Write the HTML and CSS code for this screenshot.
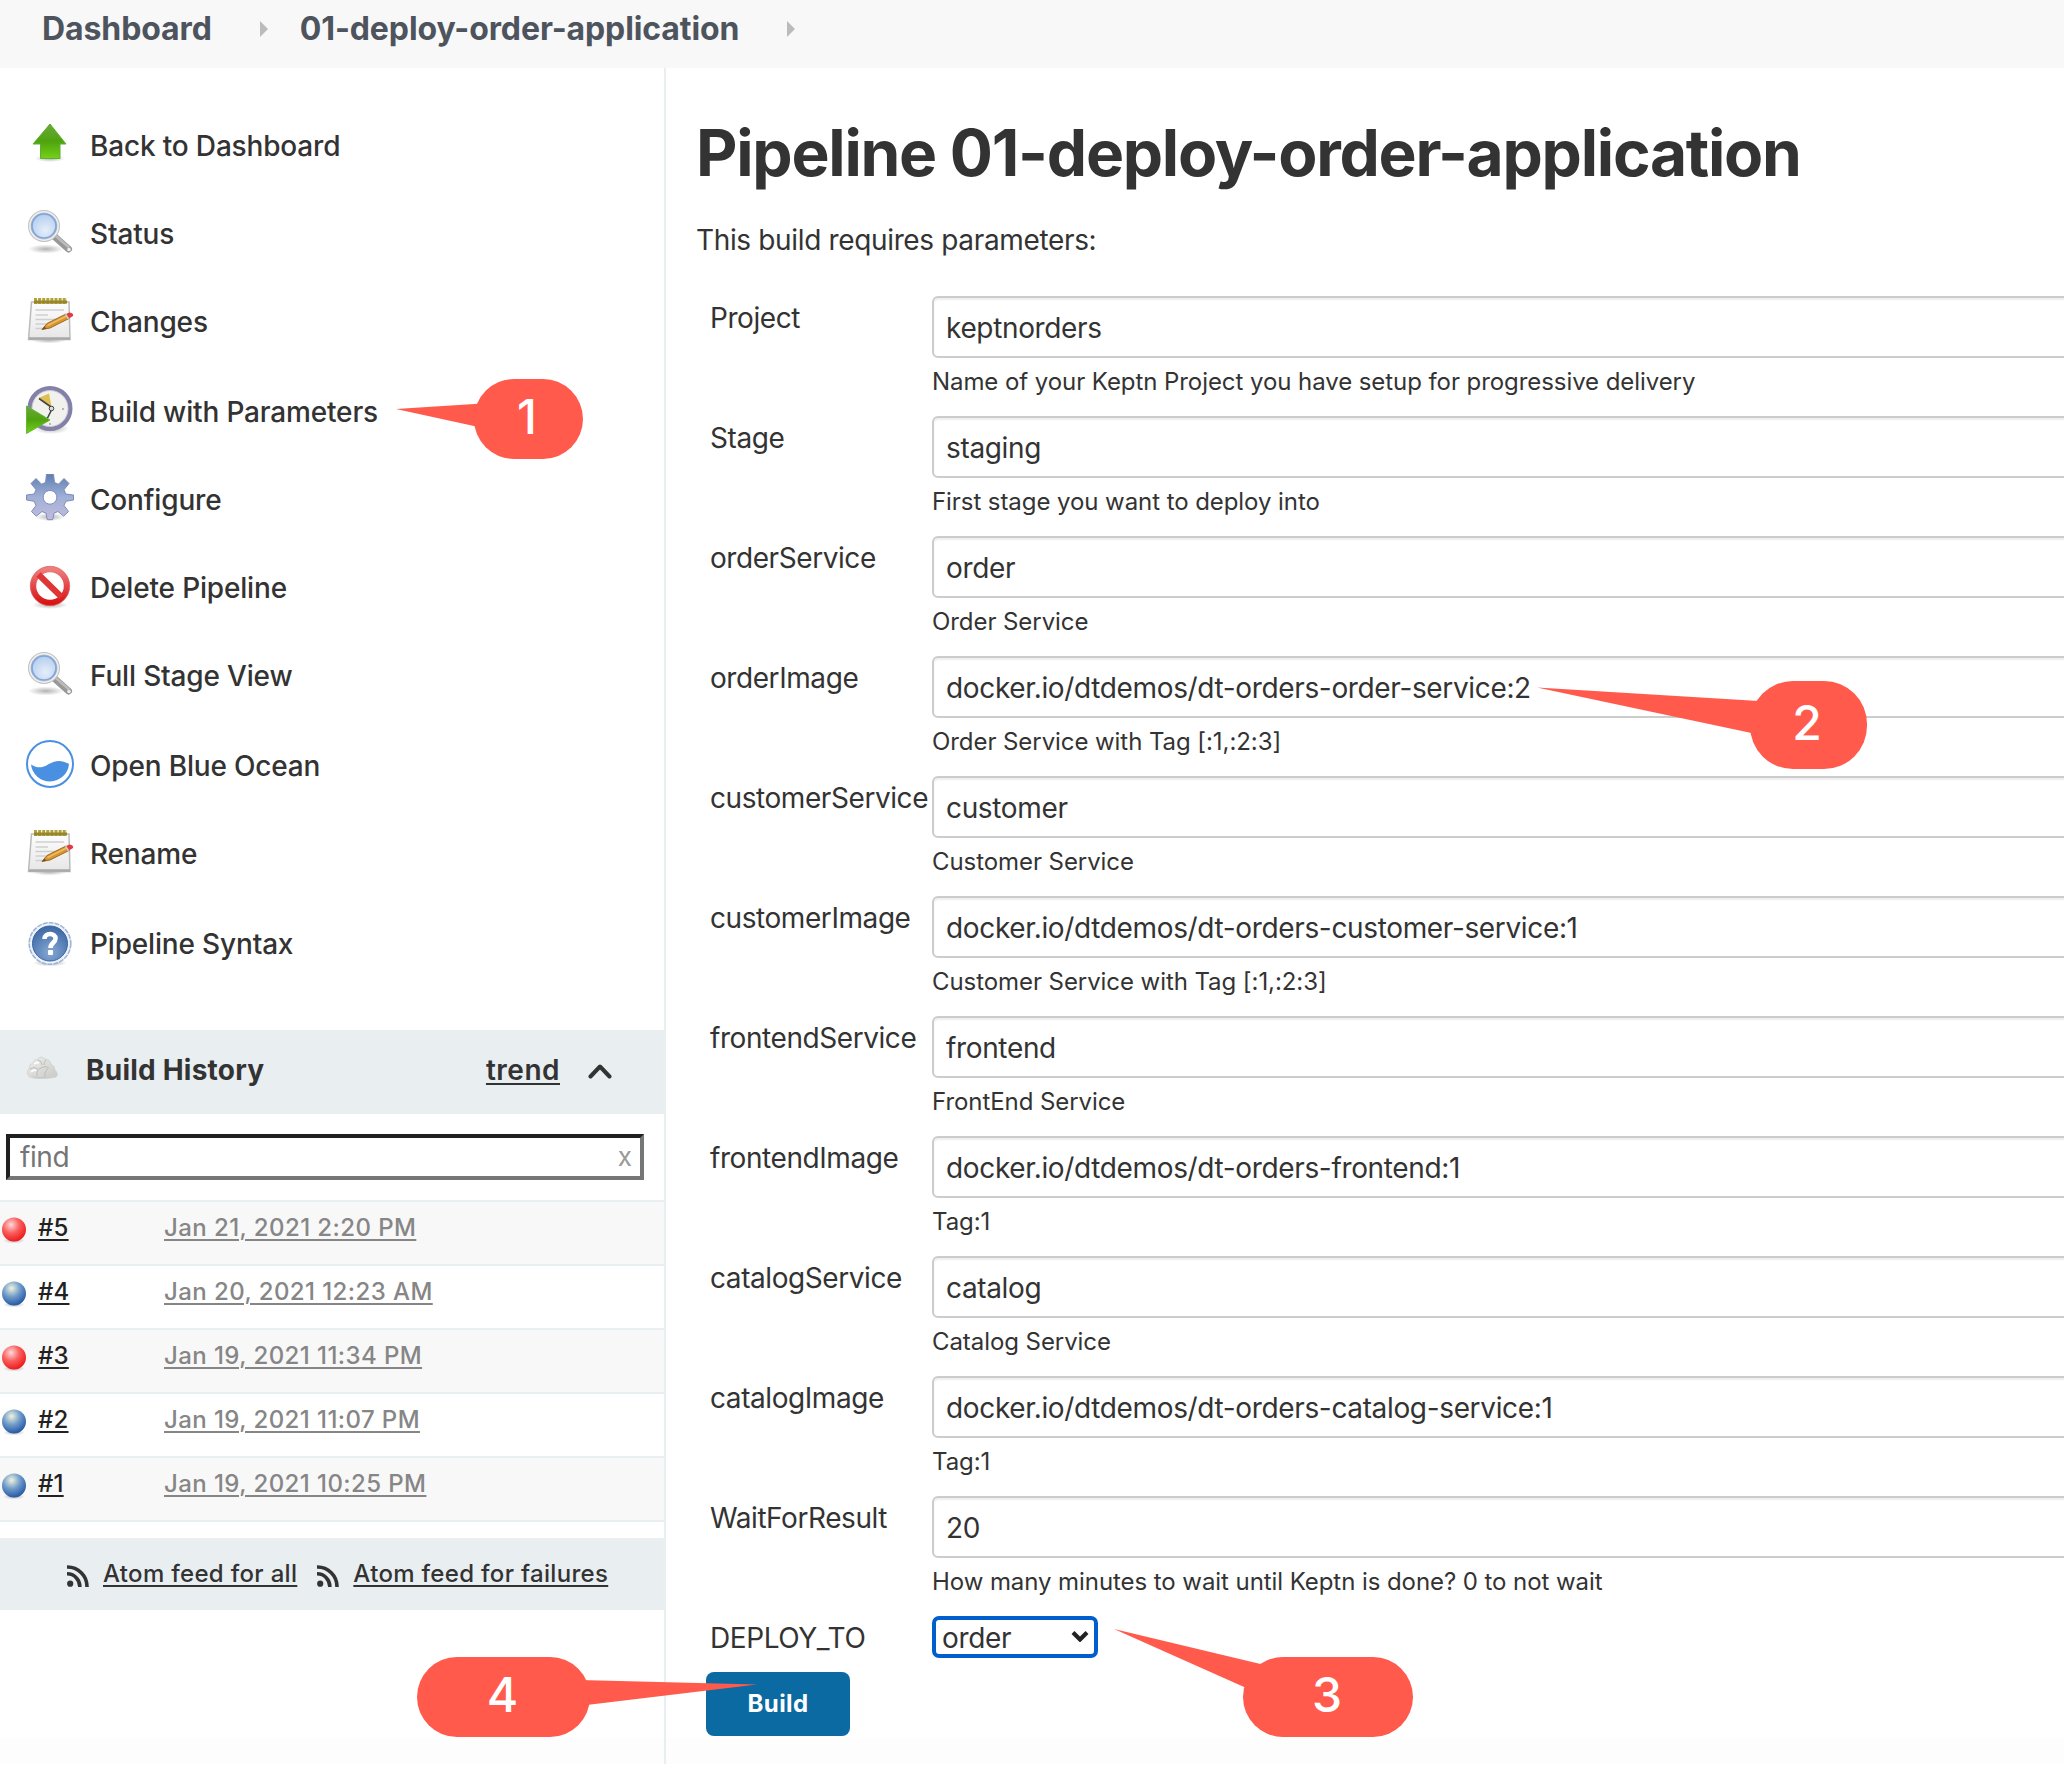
FILE: index.html
```html
<!DOCTYPE html>
<html lang="en">
<head>
<meta charset="utf-8">
<title>01-deploy-order-application</title>
<link rel="stylesheet" href="styles.css">
</head>
<body>
<svg class="defs" width="0" height="0" aria-hidden="true">
  <defs>
    <linearGradient id="g-green" x1="0" y1="0" x2="0" y2="1"><stop offset="0" stop-color="#6aa83c"/><stop offset=".5" stop-color="#4fa30f"/><stop offset="1" stop-color="#73d216"/></linearGradient>
    <radialGradient id="g-lens" cx=".55" cy=".65" r=".7"><stop offset="0" stop-color="#e6effa"/><stop offset="1" stop-color="#a9c6ec"/></radialGradient>
    <linearGradient id="g-page" x1="0" y1="0" x2="0" y2="1"><stop offset="0" stop-color="#fdfdfd"/><stop offset="1" stop-color="#e6e6e6"/></linearGradient>
    <linearGradient id="g-gear" x1="0" y1="0" x2="0" y2="1"><stop offset="0" stop-color="#5d7db0"/><stop offset=".5" stop-color="#9fb0d6"/><stop offset="1" stop-color="#c3bbde"/></linearGradient>
    <linearGradient id="g-red" x1="0" y1="0" x2="0" y2="1"><stop offset="0" stop-color="#ee7d7d"/><stop offset="1" stop-color="#d81414"/></linearGradient>
    <radialGradient id="g-help" cx=".5" cy=".75" r=".75"><stop offset="0" stop-color="#86a8d4"/><stop offset="1" stop-color="#3a67a4"/></radialGradient>
    <radialGradient id="g-ball-red" cx=".38" cy=".3" r=".7"><stop offset="0" stop-color="#ffd9d9"/><stop offset=".5" stop-color="#fa5f5f"/><stop offset="1" stop-color="#ee1c1c"/></radialGradient>
    <radialGradient id="g-ball-blue" cx=".4" cy=".28" r=".72"><stop offset="0" stop-color="#f1f3dd"/><stop offset=".5" stop-color="#6f9ccb"/><stop offset="1" stop-color="#2559a4"/></radialGradient>
    <radialGradient id="g-shadow"><stop offset="0" stop-color="#000" stop-opacity=".3"/><stop offset="1" stop-color="#000" stop-opacity="0"/></radialGradient>
    <linearGradient id="g-cloud" x1="0" y1="0" x2="1" y2="1"><stop offset="0" stop-color="#efefed"/><stop offset="1" stop-color="#c9c9c6"/></linearGradient>

    <symbol id="i-up" viewBox="0 0 48 48">
      <ellipse cx="24" cy="38.500" rx="15" ry="3.500" fill="url(#g-shadow)"/>
      <path d="M24 4 40 24H34V38.500H14.500V24H7Z" fill="url(#g-green)" stroke="#5fae30" stroke-width="1"/>
    </symbol>
    <symbol id="i-search" viewBox="0 0 48 48">
      <ellipse cx="20" cy="41" rx="18" ry="4.500" fill="url(#g-shadow)"/>
      <path d="M29 29 42.500 41" stroke="#989898" stroke-width="7" stroke-linecap="round"/>
      <path d="M30.500 28.500 42.500 39" stroke="#bcbcbc" stroke-width="2.500" stroke-linecap="round"/>
      <circle cx="43" cy="41.500" r="1.800" fill="#eee"/>
      <circle cx="18" cy="18" r="14.300" fill="url(#g-lens)" stroke="#c0c0c0" stroke-width="3.400"/>
      <circle cx="18" cy="18" r="14.200" fill="none" stroke="#f1f1f1" stroke-width="1.500"/>
      <circle cx="18" cy="18" r="12" fill="none" stroke="#7ea5dc" stroke-width="1.700"/>
    </symbol>
    <symbol id="i-note" viewBox="0 0 48 48">
      <ellipse cx="23" cy="44" rx="18" ry="3.500" fill="url(#g-shadow)"/>
      <path d="M5.500 6H43L44 43.500H2.500Z" fill="url(#g-page)" stroke="#bbb" stroke-width="1.500"/>
      <path d="M3 42.500H44" stroke="#a9a9a9" stroke-width="2.500"/>
      <path d="M8 5H41" stroke="#b3a139" stroke-width="6" stroke-dasharray="3 1.100"/>
      <path d="M8 6H41" stroke="#98862a" stroke-width="3"/>
      <path d="M9.500 14H38M9.500 19H22M9.500 23.500H32M9.500 28H22M9.500 32.500H18" stroke="#cfcfcf" stroke-width="1.700"/>
      <path d="M16 33.500 21 27.500 40 18 43 22.500 24 32Z" fill="#d9962f" stroke="#94611a" stroke-width=".9"/>
      <path d="M21.500 29.500 41.500 19.500" stroke="#f0bd63" stroke-width="1.500"/>
      <path d="M16 33.500 18.500 30.500 20.500 32.800Z" fill="#77521c"/>
      <path d="M40 18 43.500 16.500Q48 17 47 20L43 22.500Z" fill="#e33b3b"/>
      <path d="M39.500 18.200 42.500 22.700" stroke="#ccc" stroke-width="1.600"/>
    </symbol>
    <symbol id="i-clock" viewBox="0 0 48 48">
      <ellipse cx="25" cy="42.500" rx="18" ry="5.500" fill="url(#g-shadow)"/>
      <circle cx="24" cy="22.500" r="20.300" fill="#f1f1ee" stroke="#8381a8" stroke-width="4.400"/>
      <circle cx="24" cy="22.500" r="18" fill="none" stroke="#c9c8d8" stroke-width="1"/>
      <path d="M12.500 12 23 7.500 25.500 20.500Z" fill="#dfbf52"/>
      <path d="M13 12.500 26.500 22M26.500 22 21 33" stroke="#444" stroke-width="1.600"/>
      <circle cx="25.500" cy="22.500" r="2.300" fill="#ddd" stroke="#444"/>
      <circle cx="37" cy="23" r=".9" fill="#999"/><circle cx="24" cy="38" r=".9" fill="#999"/>
      <path d="M.5 20 24 34 .5 47.500Z" fill="url(#g-green)" stroke="#69b53a"/>
    </symbol>
    <symbol id="i-gear" viewBox="0 0 48 48">
      <ellipse cx="24" cy="43" rx="15" ry="4" fill="url(#g-shadow)"/>
      <path fill="url(#g-gear)" stroke="#7e8dba" stroke-width="1" fill-rule="evenodd" d="M20.500 0h7l1 8.500 4 1.700 5.500-5.700 5 5-5 6.200 1.800 4.300 7.700 1v5l-7.700 1.300-1.800 4.200 4.500 6-4.800 4.700-5.700-4.700-4 1.700-1.300 6.500h-5.400l-1.300-6.500-4-1.700-5.700 4.700-4.800-4.700 4.500-6-1.800-4.200L.5 26v-5l7.700-1 1.800-4.300-5-6.200 5-5 5.500 5.700 4-1.700ZM24 16.500a6.800 6.800 0 1 0 .01 0Z"/>
    </symbol>
    <symbol id="i-stop" viewBox="0 0 48 48">
      <ellipse cx="24" cy="43" rx="18" ry="4" fill="url(#g-shadow)"/>
      <circle cx="24" cy="24" r="16.800" fill="none" stroke="url(#g-red)" stroke-width="6"/>
      <path d="M12.500 12.500 35.500 35" stroke="#de3535" stroke-width="6"/>
      <circle cx="24" cy="24" r="19.700" fill="none" stroke="#e06060" stroke-width=".7"/>
    </symbol>
    <symbol id="i-ocean" viewBox="0 0 48 48">
      <circle cx="24" cy="24" r="23" fill="#fff" stroke="#4a90e2" stroke-width="2"/>
      <path d="M5 24.500C12 29 17 27.500 22 24.500S34 18.500 43 24A19.100 19.100 0 0 1 5 24.500Z" fill="#4a90e2"/>
    </symbol>
    <symbol id="i-help" viewBox="0 0 48 48">
      <ellipse cx="24" cy="45" rx="17" ry="3.500" fill="url(#g-shadow)"/>
      <circle cx="24" cy="25.500" r="20.800" fill="#eef3fa" stroke="#9db5d8" stroke-width="1.600" stroke-dasharray="5 1"/>
      <circle cx="24" cy="25.500" r="17.500" fill="url(#g-help)" stroke="#3b66a3" stroke-width="1"/>
      <path d="M18.500 21C18.500 14.500 29.500 14.500 29.500 20.500 29.500 25 24.500 24.500 24.500 30" fill="none" stroke="#fff" stroke-width="4.600"/>
      <rect x="22" y="32" width="5" height="5" rx="1" fill="#fff"/>
    </symbol>
    <symbol id="i-red" viewBox="0 0 28 28">
      <ellipse cx="14" cy="24.500" rx="11" ry="3" fill="url(#g-shadow)"/><circle cx="14" cy="13.500" r="12" fill="url(#g-ball-red)"/>
    </symbol>
    <symbol id="i-blue" viewBox="0 0 28 28">
      <ellipse cx="14" cy="24.500" rx="11" ry="3" fill="url(#g-shadow)"/><circle cx="14" cy="13.500" r="12" fill="url(#g-ball-blue)"/>
    </symbol>
    <symbol id="i-rss" viewBox="0 0 22 22">
      <circle cx="3.200" cy="18.700" r="3.100" fill="#333"/>
      <path d="M0 8.800A12.700 12.700 0 0 1 12.800 22M0 2A19.600 19.600 0 0 1 20 22" fill="none" stroke="#333" stroke-width="3.600"/>
    </symbol>
  </defs>
</svg>

<header class="crumbs">
  <a>Dashboard</a>
  <svg class="sep" viewBox="0 0 8 16"><path d="M0 0 8 8 0 16Z" fill="#bbb"/></svg>
  <a>01-deploy-order-application</a>
  <svg class="sep" viewBox="0 0 8 16"><path d="M0 0 8 8 0 16Z" fill="#bbb"/></svg>
</header>

<div class="page">
  <aside class="side">
    <nav class="tasks">
      <a><svg class="ico"><use href="#i-up"/></svg>Back to Dashboard</a>
      <a><svg class="ico"><use href="#i-search"/></svg>Status</a>
      <a class="wide"><svg class="ico"><use href="#i-note"/></svg>Changes</a>
      <a><svg class="ico"><use href="#i-clock"/></svg>Build with Parameters</a>
      <a><svg class="ico"><use href="#i-gear"/></svg>Configure</a>
      <a><svg class="ico"><use href="#i-stop"/></svg>Delete Pipeline</a>
      <a class="wide"><svg class="ico"><use href="#i-search"/></svg>Full Stage View</a>
      <a><svg class="ico"><use href="#i-ocean"/></svg>Open Blue Ocean</a>
      <a class="wide"><svg class="ico"><use href="#i-note"/></svg>Rename</a>
      <a><svg class="ico"><use href="#i-help"/></svg>Pipeline Syntax</a>
    </nav>

    <section class="history">
      <div class="history-head">
        <svg class="cloud" viewBox="0 0 32 24">
          <ellipse cx="16" cy="21" rx="15" ry="2.500" fill="url(#g-shadow)"/>
          <path d="M3 20Q-1 17 3 13 3 8 7 7 8 3 12 3 15-1 19 3 24 3 25 8 29 10 29 14 33 18 30 21Q16 22.500 3 20Z" fill="url(#g-cloud)" stroke="#cfcfcc" stroke-width=".7"/>
          <path d="M4 13Q8 10 12 13M11 20Q10 14 15 12M15 12Q19 9 23 12M19 21Q18 15 22 13M12 4Q16 5 16 9M20 4Q18 6 18 9" fill="none" stroke="#bdbdba" stroke-width="1"/>
          <path d="M5 16Q8 13 10 15M8 8Q11 6 13 7" fill="none" stroke="#fff" stroke-width="1.600"/>
        </svg>
        <h2>Build History</h2>
        <a class="trend">trend</a>
        <svg class="chev" viewBox="0 0 24 16"><path d="M2.500 13.500 12 3.500 21.500 13.500" fill="none" stroke="#333" stroke-width="4" stroke-linecap="round" stroke-linejoin="round"/></svg>
      </div>
      <div class="find"><input type="text" placeholder="find"><span>x</span></div>
      <ul class="builds">
        <li><svg><use href="#i-red"/></svg><a class="num">#5</a><a class="date">Jan 21, 2021 2:20 PM</a></li>
        <li><svg><use href="#i-blue"/></svg><a class="num">#4</a><a class="date">Jan 20, 2021 12:23 AM</a></li>
        <li><svg><use href="#i-red"/></svg><a class="num">#3</a><a class="date">Jan 19, 2021 11:34 PM</a></li>
        <li><svg><use href="#i-blue"/></svg><a class="num">#2</a><a class="date">Jan 19, 2021 11:07 PM</a></li>
        <li><svg><use href="#i-blue"/></svg><a class="num">#1</a><a class="date">Jan 19, 2021 10:25 PM</a></li>
      </ul>
      <div class="feeds">
        <svg><use href="#i-rss"/></svg><a>Atom feed for all</a>
        <svg><use href="#i-rss"/></svg><a>Atom feed for failures</a>
      </div>
    </section>
  </aside>

  <main class="main">
    <h1>Pipeline 01-deploy-order-application</h1>
    <p class="intro">This build requires parameters:</p>
    <form>
      <div class="param"><label>Project</label><div><input type="text" value="keptnorders"><p>Name of your Keptn Project you have setup for progressive delivery</p></div></div>
      <div class="param"><label>Stage</label><div><input type="text" value="staging"><p>First stage you want to deploy into</p></div></div>
      <div class="param"><label>orderService</label><div><input type="text" value="order"><p>Order Service</p></div></div>
      <div class="param"><label>orderImage</label><div><input type="text" value="docker.io/dtdemos/dt-orders-order-service:2"><p>Order Service with Tag [:1,:2:3]</p></div></div>
      <div class="param"><label>customerService</label><div><input type="text" value="customer"><p>Customer Service</p></div></div>
      <div class="param"><label>customerImage</label><div><input type="text" value="docker.io/dtdemos/dt-orders-customer-service:1"><p>Customer Service with Tag [:1,:2:3]</p></div></div>
      <div class="param"><label>frontendService</label><div><input type="text" value="frontend"><p>FrontEnd Service</p></div></div>
      <div class="param"><label>frontendImage</label><div><input type="text" value="docker.io/dtdemos/dt-orders-frontend:1"><p>Tag:1</p></div></div>
      <div class="param"><label>catalogService</label><div><input type="text" value="catalog"><p>Catalog Service</p></div></div>
      <div class="param"><label>catalogImage</label><div><input type="text" value="docker.io/dtdemos/dt-orders-catalog-service:1"><p>Tag:1</p></div></div>
      <div class="param"><label>WaitForResult</label><div><input type="text" value="20"><p>How many minutes to wait until Keptn is done? 0 to not wait</p></div></div>
      <div class="param last"><label>DEPLOY_TO</label>
        <div class="select">order<svg viewBox="0 0 18 12"><path d="M2 2.500 9 9.500 16 2.500" fill="none" stroke="#222" stroke-width="4.200"/></svg></div>
      </div>
      <button class="build" type="button">Build</button>
    </form>
  </main>
</div>

<svg class="callouts" width="2064" height="1768" viewBox="0 0 2064 1768">
  <g class="bubble">
    <rect x="474" y="379" width="109" height="80" rx="40"/><path d="M396 409 490 403V429.500Z"/>
    <rect x="1750" y="681" width="117" height="88" rx="43"/><path d="M1537 687.500 1775 702V738Z"/>
    <rect x="1243" y="1657" width="170" height="80" rx="40"/><path d="M1114 1629 1275 1667.500 1262 1695Z"/>
    <rect x="417" y="1657" width="173" height="80" rx="40"/><path d="M757 1684.500 570 1679.700V1707Z"/>
  </g>
  <g class="digit">
    <text x="527" y="434">1</text><text x="1807" y="740">2</text><text x="1327" y="1712">3</text><text x="502.500" y="1712">4</text>
  </g>
</svg>
</body>
</html>
```
FILE: styles.css
```css
* { box-sizing: border-box; }
body {
  margin: 0;
  background: #fff;
  color: #333;
  font-family: Inter, "Liberation Sans", sans-serif;
  font-size: 28px;
  overflow: hidden;
}
.defs { display: block; width: 0; height: 0; }
h1, h2, p, ul { margin: 0; padding: 0; }

.crumbs {
  display: flex;
  align-items: center;
  height: 68px;
  padding: 0 0 11px 42px;
  background: #f8f8f8;
  color: #4d545d;
  font-size: 32px;
  font-weight: 700;
}
.crumbs a { letter-spacing: -0.1px; }
.crumbs .sep { width: 8px; height: 16px; margin: 0 32px 0 48px; }

.page {
  display: flex;
  height: 1696px;
  background: linear-gradient(#fff 1670px, #fdfdfd 1670px);
}
.side {
  flex: none;
  width: 666px;
  border-right: 2px solid #e9eef1;
}

.tasks {
  display: flex;
  flex-direction: column;
  height: 962px;
  padding-top: 34px;
  font-weight: 500;
  letter-spacing: -0.17px;
}
.tasks a {
  display: flex;
  align-items: center;
  gap: 16px;
  height: 88px;
  padding-left: 26px;
}
.tasks .wide { margin-bottom: 2px; }
.ico { width: 48px; height: 48px; margin-bottom: 4px; }

.history-head {
  display: flex;
  align-items: center;
  height: 84px;
  margin-right: -2px;
  padding: 0 54px 4px 26px;
  background: #e9eef1;
}
.cloud { width: 32px; height: 24px; margin-bottom: 4px; }
.history-head h2 {
  flex: 1;
  padding-left: 28px;
  font-size: 28px;
  font-weight: 700;
  letter-spacing: 0.22px;
}
.trend {
  font-weight: 600;
  letter-spacing: 0.5px;
  text-decoration: underline;
  text-decoration-thickness: 2px;
  text-underline-offset: 3px;
}
.chev { width: 24px; height: 16px; margin: 1px 0 0 28px; }

.find { position: relative; padding: 20px 20px 20px 6px; }
.find input {
  display: block;
  width: 100%;
  height: 46px;
  padding: 0 10px;
  border: 4px solid;
  border-color: #1f2121 #757777 #757777 #1f2121;
  border-radius: 0;
  font: 400 28px Inter, sans-serif;
  letter-spacing: -0.4px;
}
.find input::placeholder { color: #757575; }
.find span {
  position: absolute;
  right: 32px;
  top: 28px;
  color: #999;
  font-size: 26px;
  line-height: 30px;
}

.builds { list-style: none; margin-bottom: 16px; border-bottom: 2px solid #e9eef1; }
.builds li {
  display: grid;
  grid-template-columns: 28px 136px 1fr;
  align-items: center;
  height: 64px;
  padding-bottom: 11px;
  border-top: 2px solid #e9eef1;
  font-size: 24px;
  font-weight: 500;
}
.builds li:nth-child(odd) { background: #f8f8f8; }
.builds svg { width: 28px; height: 28px; margin-top: 4px; }
.num, .date, .feeds a {
  text-decoration: underline;
  text-decoration-thickness: 2px;
  text-underline-offset: 3px;
}
.num { padding-left: 10px; color: #222; letter-spacing: 0.2px; }
.date { color: #868686; letter-spacing: 0.42px; }

.feeds {
  display: flex;
  align-items: center;
  height: 72px;
  margin-right: -2px;
  padding: 0 0 2px 67px;
  background: #e9eef1;
  font-size: 24px;
  font-weight: 500;
  letter-spacing: 0.32px;
}
.feeds svg { width: 22px; height: 22px; margin: 5px 14px 0 0; }
.feeds a { margin-right: 20px; }

.main { flex: 1; min-width: 0; padding: 40px 0 0 30px; }
h1 {
  font-size: 64px;
  line-height: 90px;
  font-weight: 700;
  letter-spacing: -1.25px;
  white-space: nowrap;
}
.intro { margin-top: 22px; line-height: 40px; letter-spacing: -0.35px; }
form { padding: 36px 0 0 10px; }
.param {
  display: grid;
  grid-template-columns: 226px 1fr;
  height: 120px;
}
.param label { padding-left: 4px; line-height: 44px; letter-spacing: -0.43px; }
.param input {
  display: block;
  width: 1160px;
  height: 62px;
  padding: 2px 12px 0;
  border: 2px solid #ccc;
  border-radius: 6px;
  box-shadow: inset 0 2px 2px rgba(0, 0, 0, .07);
  color: #333;
  font: 400 28px Inter, sans-serif;
  letter-spacing: -0.35px;
}
.param p { font-size: 24px; line-height: 48px; letter-spacing: -0.07px; }
.param.last { height: 56px; }
.select {
  display: flex;
  align-items: center;
  justify-content: space-between;
  width: 166px;
  height: 42px;
  padding: 2px 5px 0 6px;
  border: 4px solid #005fcc;
  border-radius: 7px;
  letter-spacing: -0.35px;
}
.select svg { width: 18px; height: 12px; margin-bottom: 5px; }
.build {
  display: block;
  width: 144px;
  height: 64px;
  padding: 0 0 1px;
  border: 0;
  border-radius: 8px;
  background: #0b6aa2;
  color: #fff;
  font: 700 24px Inter, sans-serif;
  letter-spacing: 0.4px;
}

.callouts { position: absolute; left: 0; top: 0; }
.bubble { fill: #ff5a4c; }
.digit { fill: #fff; font-size: 48px; font-weight: 500; text-anchor: middle; }
```
